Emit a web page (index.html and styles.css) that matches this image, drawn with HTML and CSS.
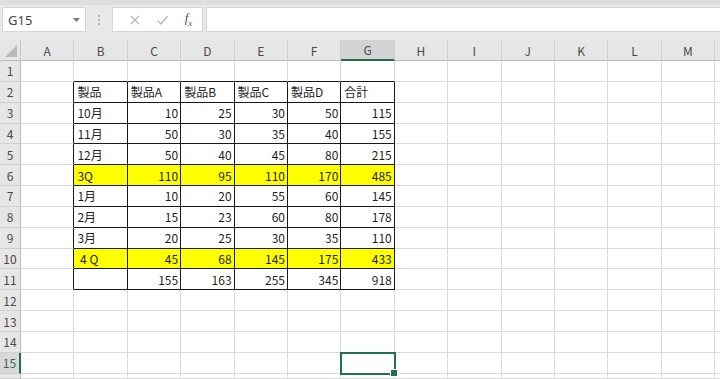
FILE: index.html
```html
<!DOCTYPE html>
<html lang="ja">
<head>
    <meta charset="UTF-8">
    <meta name="viewport" content="width=device-width, initial-scale=1.0">
    <title>Book1 - Excel</title>
    <link rel="stylesheet" href="styles.css">
</head>
<body>
    <div class="formula-bar">
        <div class="name-box">
            <span>G15</span>
            <svg class="caret" width="7" height="4" viewBox="0 0 7 4"><path d="M0 0h7L3.5 4z" fill="#777"/></svg>
        </div>
        <div class="grip">
            <i></i><i></i><i></i>
        </div>
        <div class="fx-buttons">
            <svg width="12" height="12" viewBox="0 0 12 12"><path d="M2 2l8 8M10 2l-8 8" stroke="#b8b8b8" stroke-width="1.3" fill="none"/></svg>
            <svg width="13" height="12" viewBox="0 0 13 12"><path d="M1.5 6.5l3.5 3.5L11.5 2" stroke="#b8b8b8" stroke-width="1.4" fill="none"/></svg>
            <span class="fx">f<sub>x</sub></span>
        </div>
        <div class="formula-input"></div>
    </div>

    <div class="sheet" id="sheet"></div>

    <script>
        // last column / row are only partly on screen, so they get no label
        const cols = ['A','B','C','D','E','F','G','H','I','J','K','L','M',''];

        // B..G values per row (rows 2-11)
        const data = {
            2: ['製品', '製品A', '製品B', '製品C', '製品D', '合計'],
            3: ['10月', 10, 25, 30, 50, 115],
            4: ['11月', 50, 30, 35, 40, 155],
            5: ['12月', 50, 40, 45, 80, 215],
            6: ['3Q', 110, 95, 110, 170, 485],
            7: ['1月', 10, 20, 55, 60, 145],
            8: ['2月', 15, 23, 60, 80, 178],
            9: ['3月', 20, 25, 30, 35, 110],
            10: ['\u00a04 Q', 45, 68, 145, 175, 433],
            11: ['', 155, 163, 255, 345, 918]
        };
        const yellowRows = [6, 10];

        const sheet = document.getElementById('sheet');

        function addCell(className, text) {
            const div = document.createElement('div');
            div.className = className;
            if (text !== undefined) div.textContent = text;
            sheet.appendChild(div);
        }

        // header row
        addCell('corner');
        cols.forEach(c => {
            addCell('col-head' + (c === 'G' ? ' active' : ''), c);
        });

        for (let r = 1; r <= 16; r++) {
            addCell('row-head' + (r === 15 ? ' active' : ''), r < 16 ? r : '');
            cols.forEach((c, i) => {
                let cls = 'cell';
                let text = '';
                const inTable = r >= 2 && r <= 11 && i >= 1 && i <= 6;
                if (inTable) {
                    cls += ' boxed';
                    const v = data[r][i - 1];
                    text = v;
                    if (typeof v === 'number') cls += ' num';
                    if (yellowRows.includes(r)) cls += ' yellow';
                }
                if (r >= 2 && r <= 11 && i === 0) cls += ' edge-right';
                if (r === 1 && i >= 1 && i <= 6) cls += ' edge-bottom';
                if (r === 15 && c === 'G') cls += ' selected';
                addCell(cls, text);
            });
        }
    </script>
</body>
</html>
```

FILE: styles.css
```css
* {
    margin: 0;
    padding: 0;
    box-sizing: border-box;
}

body {
    width: 720px;
    height: 379px;
    overflow: hidden;
    background: #fff;
    font-family: 'Noto Sans CJK JP', 'Noto Sans', sans-serif;
}

.formula-bar {
    height: 40px;
    background: #e9e9e9;
    border-top: 5px solid #dedede;
    display: flex;
    align-items: flex-start;
    padding: 2px 0 0 2px;
}

.name-box {
    width: 84px;
    height: 25px;
    background: #fff;
    border: 1px solid #d6d6d6;
    display: flex;
    align-items: center;
    justify-content: space-between;
    padding: 0 5px 0 5px;
    font-family: 'Noto Sans', sans-serif;
    font-size: 13px;
    color: #444;
}

.grip {
    width: 26px;
    height: 25px;
    display: flex;
    flex-direction: column;
    align-items: center;
    justify-content: center;
    gap: 2px;
}

.grip i {
    width: 2px;
    height: 2px;
    background: #b5b5b5;
}

.fx-buttons {
    width: 91px;
    height: 25px;
    background: #fff;
    border: 1px solid #d6d6d6;
    display: flex;
    align-items: center;
    justify-content: space-around;
    padding: 0 2px 0 8px;
}

.fx {
    font-family: 'Liberation Serif', serif;
    font-style: italic;
    font-size: 13px;
    color: #555;
    line-height: 1;
}

.fx sub {
    font-size: 9px;
}

.formula-input {
    flex: 1;
    height: 25px;
    margin-left: 3px;
    background: #fff;
    border: 1px solid #d6d6d6;
    border-right: none;
}

/* the last column and row are cut by the window edge */
.sheet {
    width: 720px;
    height: 339px;
    overflow: hidden;
    display: grid;
    grid-template-columns: 21px repeat(13, 53.4px) 1fr;
    grid-template-rows: 21px repeat(15, 20.85px) 1fr;
    font-size: 12px;
}

.corner {
    background: #e6e6e6;
    border-right: 1px solid #c6c6c6;
    border-bottom: 1px solid #bdbdbd;
    position: relative;
}

.corner::after {
    content: '';
    position: absolute;
    right: 3px;
    bottom: 3px;
    border-style: solid;
    border-width: 0 0 12px 12px;
    border-color: transparent transparent #b9b9b9 transparent;
}

.col-head,
.row-head {
    background: #e6e6e6;
    color: #4a4a4a;
    display: flex;
    align-items: center;
    justify-content: center;
    border-right: 1px solid #cfcfcf;
    border-bottom: 1px solid #cfcfcf;
}

.col-head {
    border-bottom-color: #bdbdbd;
}

.row-head {
    border-right-color: #bdbdbd;
}

.col-head.active {
    background: #d3d3d3;
    border-bottom: 2px solid #217346;
}

.row-head.active {
    background: #d9d9d9;
    color: #3f6650;
    border-right: 2px solid #217346;
}

.cell {
    border-right: 1px solid #dadada;
    border-bottom: 1px solid #dadada;
    padding: 0 3px;
    display: flex;
    align-items: center;
    white-space: nowrap;
    overflow: hidden;
    color: #1e1e1e;
}

.cell.num {
    justify-content: flex-end;
    padding-right: 2px;
}

.cell.boxed,
.cell.edge-right {
    border-right-color: #1a1a1a;
}

.cell.boxed,
.cell.edge-bottom {
    border-bottom-color: #1a1a1a;
}

.cell.yellow {
    background: #ffff00;
}

.cell.selected {
    position: relative;
    overflow: visible;
    outline: 2px solid #217346;
    outline-offset: -1px;
}

.cell.selected::after {
    content: '';
    position: absolute;
    right: -4px;
    bottom: -4px;
    width: 6px;
    height: 6px;
    background: #217346;
    border: 1px solid #fff;
}
```
